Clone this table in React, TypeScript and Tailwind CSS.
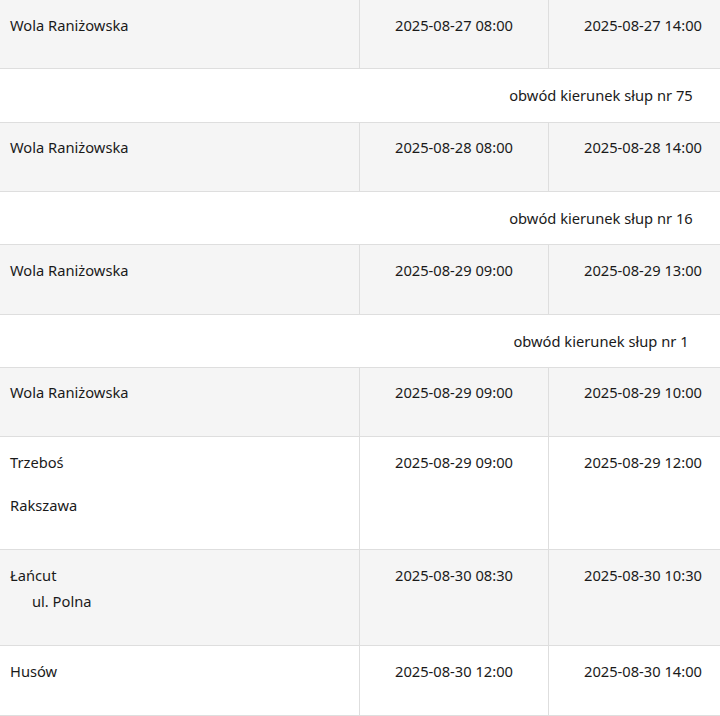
const rows: Array<
  | { kind: 'sep'; label: string }
  | { kind: 'row'; gray: boolean; place: string[]; indent?: boolean; from: string; to: string; gap: string }
> = [
  { kind: 'row', gray: true, place: ['Wola Raniżowska'], from: '2025-08-27 08:00', to: '2025-08-27 14:00', gap: '' },
  { kind: 'sep', label: 'obwód kierunek słup nr 75' },
  { kind: 'row', gray: true, place: ['Wola Raniżowska'], from: '2025-08-28 08:00', to: '2025-08-28 14:00', gap: '' },
  { kind: 'sep', label: 'obwód kierunek słup nr 16' },
  { kind: 'row', gray: true, place: ['Wola Raniżowska'], from: '2025-08-29 09:00', to: '2025-08-29 13:00', gap: '' },
  { kind: 'sep', label: 'obwód kierunek słup nr 1' },
  { kind: 'row', gray: true, place: ['Wola Raniżowska'], from: '2025-08-29 09:00', to: '2025-08-29 10:00', gap: '' },
  { kind: 'row', gray: false, place: ['Trzeboś', 'Rakszawa'], from: '2025-08-29 09:00', to: '2025-08-29 12:00', gap: 'mt-[21.67px]' },
  { kind: 'row', gray: true, place: ['Łańcut', 'ul. Polna'], indent: true, from: '2025-08-30 08:30', to: '2025-08-30 10:30', gap: 'mt-[4.67px]' },
  { kind: 'row', gray: false, place: ['Husów'], from: '2025-08-30 12:00', to: '2025-08-30 14:00', gap: '' },
];

export default function App() {
  return (
    <div className="w-[720px] h-[716px] overflow-hidden bg-white text-[14.7px] leading-[22px] text-[#1a1a1a] font-['Noto_Sans',sans-serif]">
      {rows.map((r, i) =>
        r.kind === 'sep' ? (
          <div key={i} className="flex h-[53.33px] items-center justify-end border-b border-[#dedede]">
            <div className="w-[238px] text-center">{r.label}</div>
          </div>
        ) : (
          <div
            key={i}
            className={`flex w-[737px] border-b border-[#dedede] ${r.gray ? 'bg-[#f5f5f5]' : 'bg-white'}`}
          >
            <div className="w-[360px] shrink-0 border-r border-[#dedede] pl-[10px] pt-[13.5px] pb-[32.83px]">
              {r.place.map((p, j) => (
                <div key={j} className={j > 0 ? `${r.gap} ${r.indent ? 'pl-[22px]' : ''}` : ''}>
                  {p}
                </div>
              ))}
            </div>
            <div className="w-[189px] shrink-0 border-r border-[#dedede] pt-[13.5px] text-center">{r.from}</div>
            <div className="w-[188px] shrink-0 pt-[13.5px] text-center">{r.to}</div>
          </div>
        )
      )}
    </div>
  );
}
